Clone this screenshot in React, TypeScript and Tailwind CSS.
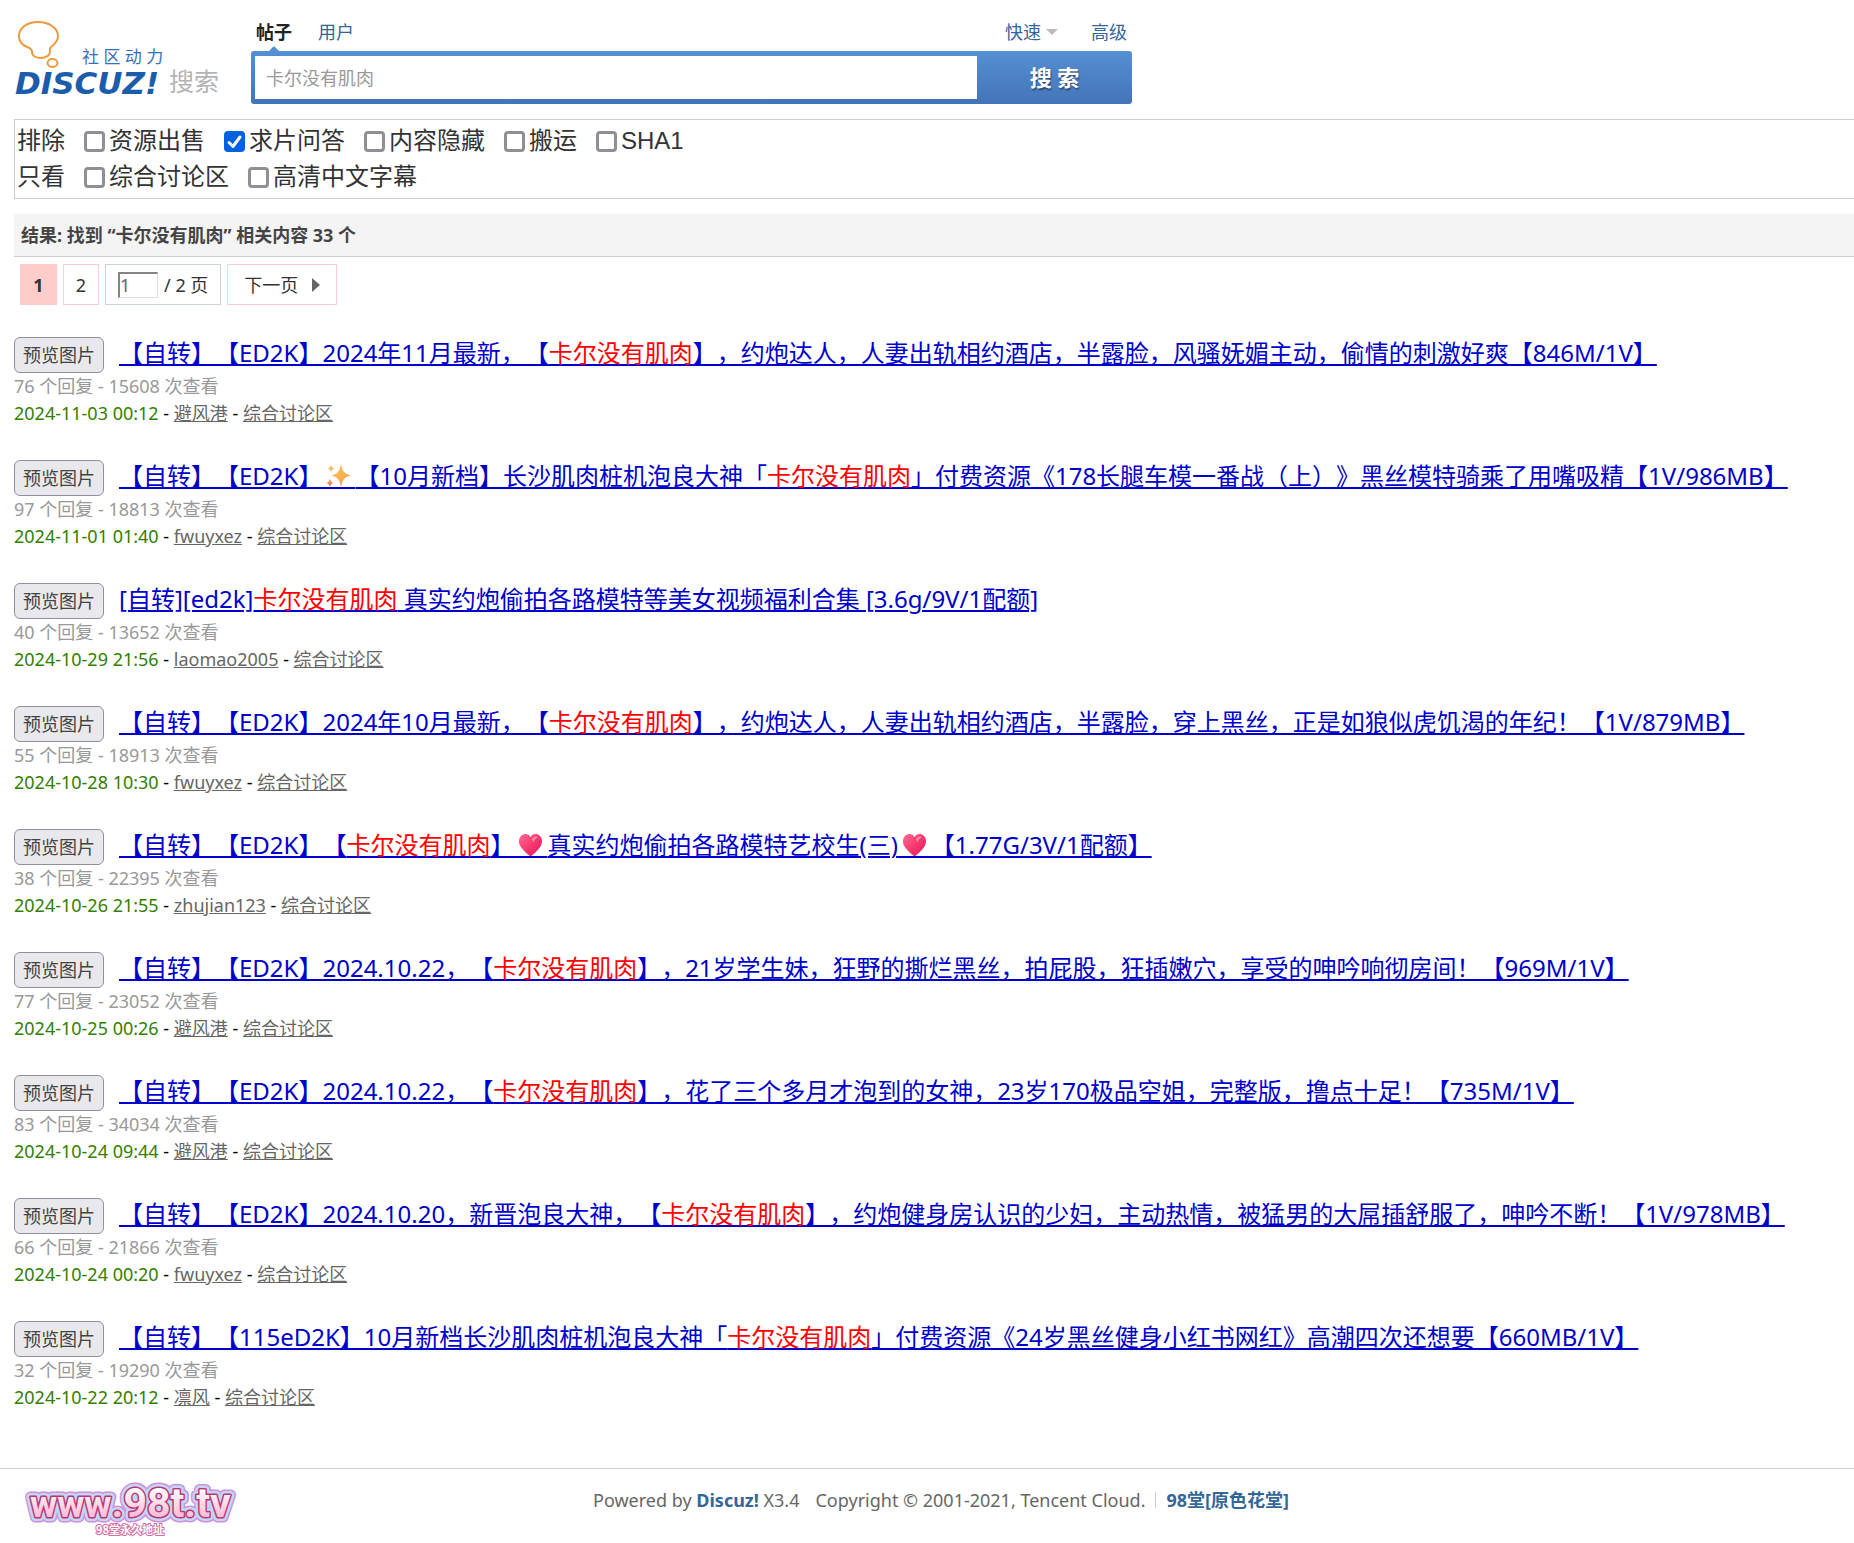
import { Fragment } from "react";

const KEYWORD = "卡尔没有肌肉";

const EXCLUDE = [
  { label: "资源出售", checked: false },
  { label: "求片问答", checked: true },
  { label: "内容隐藏", checked: false },
  { label: "搬运", checked: false },
  { label: "SHA1", checked: false },
];

const ONLY = [
  { label: "综合讨论区", checked: false },
  { label: "高清中文字幕", checked: false },
];

const THREADS = [
  {
    title: "【自转】【ED2K】2024年11月最新，【卡尔没有肌肉】，约炮达人，人妻出轨相约酒店，半露脸，风骚妩媚主动，偷情的刺激好爽【846M/1V】",
    replies: 76,
    views: 15608,
    date: "2024-11-03 00:12",
    author: "避风港",
  },
  {
    title: "【自转】【ED2K】✨【10月新档】长沙肌肉桩机泡良大神「卡尔没有肌肉」付费资源《178长腿车模一番战（上）》黑丝模特骑乘了用嘴吸精【1V/986MB】",
    replies: 97,
    views: 18813,
    date: "2024-11-01 01:40",
    author: "fwuyxez",
  },
  {
    title: "[自转][ed2k]卡尔没有肌肉 真实约炮偷拍各路模特等美女视频福利合集 [3.6g/9V/1配额]",
    replies: 40,
    views: 13652,
    date: "2024-10-29 21:56",
    author: "laomao2005",
  },
  {
    title: "【自转】【ED2K】2024年10月最新，【卡尔没有肌肉】，约炮达人，人妻出轨相约酒店，半露脸，穿上黑丝，正是如狼似虎饥渴的年纪！【1V/879MB】",
    replies: 55,
    views: 18913,
    date: "2024-10-28 10:30",
    author: "fwuyxez",
  },
  {
    title: "【自转】【ED2K】【卡尔没有肌肉】💗真实约炮偷拍各路模特艺校生(三)💗【1.77G/3V/1配额】",
    replies: 38,
    views: 22395,
    date: "2024-10-26 21:55",
    author: "zhujian123",
  },
  {
    title: "【自转】【ED2K】2024.10.22，【卡尔没有肌肉】，21岁学生妹，狂野的撕烂黑丝，拍屁股，狂插嫩穴，享受的呻吟响彻房间！【969M/1V】",
    replies: 77,
    views: 23052,
    date: "2024-10-25 00:26",
    author: "避风港",
  },
  {
    title: "【自转】【ED2K】2024.10.22，【卡尔没有肌肉】，花了三个多月才泡到的女神，23岁170极品空姐，完整版，撸点十足！【735M/1V】",
    replies: 83,
    views: 34034,
    date: "2024-10-24 09:44",
    author: "避风港",
  },
  {
    title: "【自转】【ED2K】2024.10.20，新晋泡良大神，【卡尔没有肌肉】，约炮健身房认识的少妇，主动热情，被猛男的大屌插舒服了，呻吟不断！【1V/978MB】",
    replies: 66,
    views: 21866,
    date: "2024-10-24 00:20",
    author: "fwuyxez",
  },
  {
    title: "【自转】【115eD2K】10月新档长沙肌肉桩机泡良大神「卡尔没有肌肉」付费资源《24岁黑丝健身小红书网红》高潮四次还想要【660MB/1V】",
    replies: 32,
    views: 19290,
    date: "2024-10-22 20:12",
    author: "凛风",
  },
];

// Both emoji carry their own piece of the underline, inline SVG does not get one.
function Sparkles() {
  return (
    <svg viewBox="0 0 33 26" className="inline h-[26px] w-[33px] align-[-4px]" role="img" aria-label="✨">
      <defs>
        <linearGradient id="spark" x1="0" y1="0" x2="1" y2="1">
          <stop offset="0" stopColor="#ffc95c" />
          <stop offset="1" stopColor="#f09a4e" />
        </linearGradient>
      </defs>
      <path d="M0 25h33" stroke="#0000cc" strokeWidth="2" />
      <path d="M19 1c1.600 7.500 3 9.500 10 11.500-7 2-8.400 4-10 12-1.600-8-3-10-9.500-12C16 10.500 17.400 8.500 19 1z" fill="url(#spark)" />
      <path d="M9 1.500c.6 2.800 1.200 3.400 3.500 4-2.300.6-2.900 1.300-3.500 4-.6-2.700-1.200-3.400-3.500-4 2.300-.6 2.900-1.200 3.500-4z" fill="#f6b765" />
      <path d="M8 15.500c.7 3 1.400 3.800 4 4.500-2.600.7-3.300 1.500-4 4.500-.7-3-1.400-3.800-4-4.500 2.600-.7 3.300-1.500 4-4.500z" fill="#f08f5f" />
    </svg>
  );
}

function Heart() {
  return (
    <svg viewBox="0 0 33 26" className="inline h-[26px] w-[33px] align-[-4px]" role="img" aria-label="💗">
      <defs>
        <linearGradient id="heart" x1="0" y1="0" x2="1" y2="1">
          <stop offset="0" stopColor="#ff6a92" />
          <stop offset="0.600" stopColor="#f5316a" />
          <stop offset="1" stopColor="#d81b60" />
        </linearGradient>
      </defs>
      <path d="M0 25h33" stroke="#0000cc" strokeWidth="2" />
      <path d="M16.500 5C14.500 1.500 10 1 7 4c-3 3.200-2.600 8 .6 12 2.400 3.200 5.400 6 8.900 8.500 3.500-2.500 6.500-5.300 8.900-8.500 3.200-4 3.600-8.800.6-12-3-3-7.500-2.500-9.500 1z" fill="url(#heart)" />
      <path d="M18 7c1.500-2.500 4-3.200 6-1.800-2 .6-3.800 2.300-4.400 5.300z" fill="#ff8fa6" />
    </svg>
  );
}

function ThreadTitle({ text }: { text: string }) {
  const parts = text.split(/(卡尔没有肌肉|✨|💗)/u);
  return (
    <a href="#" className="text-2xl leading-8 text-[#0000cc] underline decoration-2 underline-offset-2">
      {parts.map((part, i) => {
        if (part === KEYWORD) return <span key={i} className="text-[#ff0000]">{part}</span>;
        if (part === "✨") return <Sparkles key={i} />;
        if (part === "💗") return <Heart key={i} />;
        return <Fragment key={i}>{part}</Fragment>;
      })}
    </a>
  );
}

function Check({ label, checked }: { label: string; checked: boolean }) {
  return (
    <label className="flex items-center gap-1">
      <span className="relative flex">
        <input
          type="checkbox"
          defaultChecked={checked}
          className="peer size-[21px] appearance-none rounded-[4px] border-[3px] border-[#8f8f96] bg-white checked:border-[#0061e0] checked:bg-[#0061e0]"
        />
        <svg viewBox="0 0 21 21" className="pointer-events-none absolute inset-0 hidden peer-checked:block" fill="none" stroke="#fff" strokeWidth="3" strokeLinecap="round" strokeLinejoin="round">
          <path d="M5 11.500l4 4L16 6" />
        </svg>
      </span>
      {label}
    </label>
  );
}

function FilterRow({ name, items }: { name: string; items: typeof EXCLUDE }) {
  return (
    <div className="flex h-9 items-center gap-[19px]">
      <span>{name}</span>
      {items.map((item) => (
        <Check key={item.label} {...item} />
      ))}
    </div>
  );
}

function DiscuzLogo() {
  return (
    <svg viewBox="0 0 208 86" className="h-[86px] w-[208px]" role="img" aria-label="Discuz! 社区动力 搜索">
      <g fill="#fff" stroke="#ec9a3c" strokeWidth="2">
        <path d="M24 4C13 4 5 10 5 18c0 5 3 9 8 11 3 1 5 2 5 5 0 4 4 6 9 6s9-3 9-6c0-2-1-3 1-5 4-3 7-6 7-11C44 10 35 4 24 4z" />
        <ellipse cx="38.500" cy="45" rx="5" ry="4" />
      </g>
      <text x="68" y="45" fontSize="17" fill="#3a70b8" fontFamily="'Noto Sans', 'Noto Sans CJK SC', sans-serif">社 区 动 力</text>
      <text x="1" y="76" fontSize="31" fontWeight="700" fontStyle="italic" fill="#1b5cab" fontFamily="'DejaVu Sans', sans-serif">DISCUZ!</text>
      <text x="155" y="73" fontSize="25" fill="#b4b4b4" fontFamily="'Noto Sans CJK SC', sans-serif">搜索</text>
    </svg>
  );
}

function SiteLogo() {
  return (
    <svg viewBox="0 0 216 60" className="h-15 w-[216px]" role="img" aria-label="www.98t.tv 98堂永久地址">
      <defs>
        <linearGradient id="candy" x1="0" y1="0" x2="0" y2="1">
          <stop offset="0.200" stopColor="#fff" />
          <stop offset="0.800" stopColor="#ffb9d6" />
        </linearGradient>
        <text id="site" x="6" y="36" fontFamily="Roboto, sans-serif" fontWeight="700" strokeLinejoin="round">
          <tspan fontSize="37">www</tspan>
          <tspan fontSize="41">.98t.tv</tspan>
        </text>
      </defs>
      <use href="#site" stroke="#cf8fdc" strokeWidth="11" />
      <use href="#site" stroke="#c4d6f6" strokeWidth="8" />
      <use href="#site" stroke="#b8386f" strokeWidth="3" />
      <use href="#site" fill="url(#candy)" />
      <text x="72" y="53" fontSize="11" fontWeight="700" fill="#fff" stroke="#d4709f" strokeWidth="2" paintOrder="stroke" fontFamily="'Noto Sans CJK SC', sans-serif">98堂永久地址</text>
    </svg>
  );
}

function SearchHeader() {
  return (
    <header className="flex pt-[18px] pl-[14px]">
      <DiscuzLogo />
      <form className="ml-[29px] w-[881px]" onSubmit={(e) => e.preventDefault()}>
        <nav className="flex h-[33px] px-[5px] leading-7 text-[#336699]">
          <a href="#" className="flex flex-col items-center font-bold text-[#222]">
            帖子
            <span className="size-0 border-x-[6px] border-b-[6px] border-x-transparent border-b-[#5590d2]" />
          </a>
          <a href="#" className="ml-[26px]">用户</a>
          <a href="#" className="ml-auto flex items-center gap-[5px] self-start">
            快速
            <span className="size-0 border-x-[6px] border-t-[6px] border-x-transparent border-t-[#bbb]" />
          </a>
          <a href="#" className="ml-[33px]">高级</a>
        </nav>
        <div className="flex h-[53px] rounded-[3px] bg-linear-to-b from-[#5590d2] to-[#4474b8]">
          <input
            type="text"
            aria-label="搜索"
            defaultValue={KEYWORD}
            className="my-[5px] ml-1 min-w-0 flex-1 bg-white px-[11px] text-[#999] outline-none"
          />
          <button type="submit" className="w-[155px] text-[22px] font-bold text-white text-shadow-[1px_2px_1px_#33507d]">
            搜 索
          </button>
        </div>
      </form>
    </header>
  );
}

function Pager() {
  return (
    <nav className="flex h-[41px] gap-[6px] pl-[6px] text-[#333]">
      <strong className="flex w-[37px] items-center justify-center bg-[#ffcccc]">1</strong>
      <a href="#" className="flex w-9 items-center justify-center border border-[#ffccd5]">2</a>
      <label className="flex items-center gap-[6px] border border-[#ccd5d8] px-3">
        <input
          type="text"
          aria-label="页码"
          defaultValue="1"
          className="h-[26px] w-10 border-t-2 border-r border-b border-l-2 border-t-[#848484] border-r-[#ddd] border-b-[#ddd] border-l-[#848484] text-[#666]"
        />
        / 2 页
      </label>
      <a href="#" className="flex items-center gap-[14px] border border-[#ffccd5] px-4">
        下一页
        <span className="size-0 border-y-[7px] border-l-[8px] border-y-transparent border-l-[#666]" />
      </a>
    </nav>
  );
}

export default function App() {
  return (
    <div className="bg-white font-['Noto_Sans','Noto_Sans_CJK_SC',sans-serif] text-lg text-[#333] [text-spacing-trim:space-all]">
      <SearchHeader />

      <main className="pl-[14px]">
        <section className="mt-[15px] border border-r-0 border-[#cdcdcd] py-[3px] pl-[2px] font-['Liberation_Sans','Noto_Sans_CJK_SC',sans-serif] text-2xl">
          <FilterRow name="排除" items={EXCLUDE} />
          <FilterRow name="只看" items={ONLY} />
        </section>

        <h1 className="mt-[15px] border-b border-[#cdcdcd] bg-[#f4f4f4] pl-[7px] leading-[42px] font-bold text-[#444]">
          结果: 找到 “{KEYWORD}” 相关内容 33 个
        </h1>

        <div className="mt-[7px]">
          <Pager />
        </div>

        <ul className="mt-8 flex flex-col gap-[33px]">
          {THREADS.map((t) => (
            <li key={t.date}>
              <div className="flex h-9 items-start gap-[15px]">
                <button type="button" className="h-9 shrink-0 rounded-[6px] border border-[#8f8f9d] bg-[#e9e9ed] px-2 leading-8 text-[#444]">
                  预览图片
                </button>
                <ThreadTitle text={t.title} />
              </div>
              <p className="leading-[27px] text-[#999]">
                {t.replies} 个回复 - {t.views} 次查看
              </p>
              <p className="leading-[27px] text-black">
                <time className="text-[#338000]">{t.date}</time>
                {" - "}
                <a href="#" className="text-[#666] underline">{t.author}</a>
                {" - "}
                <a href="#" className="text-[#666] underline">综合讨论区</a>
              </p>
            </li>
          ))}
        </ul>
      </main>

      <footer className="mt-[57px] flex items-start border-t border-[#cdcdcd] pt-3 pl-6">
        <SiteLogo />
        <p className="flex flex-1 items-center justify-center pr-[212px] leading-[38px] text-[#666]">
          <span>
            Powered by <a href="#" className="font-bold text-[#336699]">Discuz!</a> X3.4
          </span>
          <span className="ml-4">Copyright © 2001-2021, Tencent Cloud.</span>
          <span className="mx-[10px] h-4 w-px bg-[#ccc]" />
          <a href="#" className="font-bold text-[#336699]">98堂[原色花堂]</a>
        </p>
      </footer>
    </div>
  );
}
